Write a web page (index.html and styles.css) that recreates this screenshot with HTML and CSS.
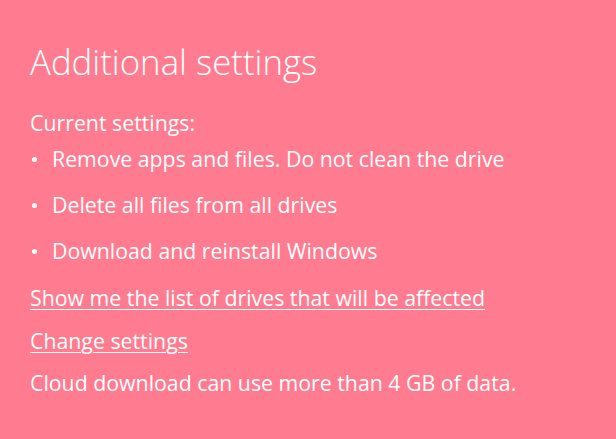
FILE: index.html
```html
<!DOCTYPE html>
<html>
<head>
<meta charset="utf-8">
<link rel="stylesheet" href="styles.css">
</head>
<body>
<main class="panel">
  <h1 class="title">Additional settings</h1>
  <p class="label">Current settings:</p>
  <ul class="list">
    <li>Remove apps and files. Do not clean the drive</li>
    <li>Delete all files from all drives</li>
    <li>Download and reinstall Windows</li>
  </ul>
  <a class="link link-first" href="#">Show me the list of drives that will be affected</a>
  <a class="link" href="#">Change settings</a>
  <p class="note">Cloud download can use more than 4 GB of data.</p>
</main>
</body>
</html>
```
FILE: styles.css
```css
html, body {
  margin: 0;
  height: 100%;
  background: #ff7b8f;
}
.panel {
  padding: 38px 0 0 30px;
  color: #ffffff;
  font-family: "Open Sans", "Noto Sans", sans-serif;
  display: flex;
  flex-direction: column;
  align-items: flex-start;
}
.title {
  margin: 0;
  font-weight: 300;
  font-size: 34.8px;
  line-height: 48px;
}
.label, .note {
  margin: 0;
  font-size: 21.3px;
  line-height: 26px;
}
.label { margin-top: 24px; }
.list {
  list-style: none;
  margin: 0;
  padding: 0;
  display: flex;
  flex-direction: column;
}
.list li {
  font-size: 21.3px;
  line-height: 46px;
  display: flex;
  align-items: center;
}
.list li::before {
  content: "";
  width: 5px;
  height: 5px;
  border-radius: 50%;
  background: #fff;
  margin: 0 15px 0 2px;
}
.link {
  color: #fff;
  font-size: 21.3px;
  line-height: 43px;
  text-decoration: underline;
  text-underline-offset: 3px;
  text-decoration-thickness: 1px;
}
.link-first { margin-top: 1.5px; }
.note { margin-top: 8px; }
```
